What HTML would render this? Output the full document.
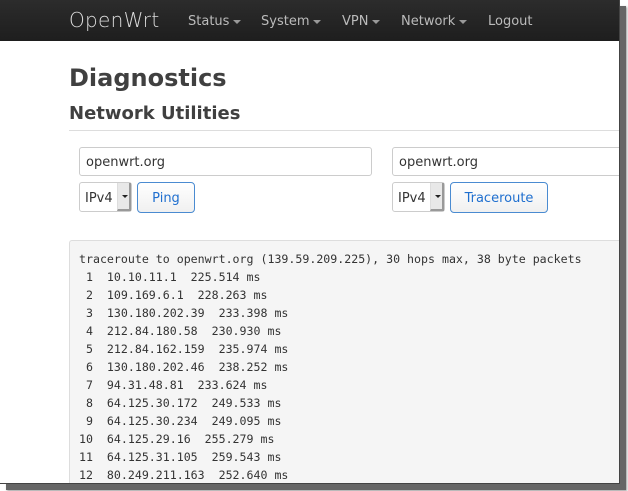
<!DOCTYPE html>
<html><head><meta charset="utf-8"><style>
*{box-sizing:border-box;margin:0;padding:0}
body{width:628px;height:491px;background:#fff;overflow:hidden;position:relative;font-family:"DejaVu Sans","Liberation Sans",sans-serif}
#shadow{position:absolute;left:6px;top:6px;width:620px;height:484px;background:#666;box-shadow:1px 1px 2px #999}
#page{position:absolute;left:0;top:0;width:620px;height:484px;background:#fff;overflow:hidden;border-right:1px solid #444;border-bottom:1px solid #444}
#nav{height:41px;background:linear-gradient(#2c2c2c,#1e1e1e);position:relative;color:#ccc}
#nav .brand{position:absolute;left:69px;top:8px;font-size:20px;color:#ddd;font-weight:300;letter-spacing:0.3px}
#nav .it{position:absolute;top:14px;font-size:13px;color:#bbb}
.car{display:inline-block;border-left:4px solid transparent;border-right:4px solid transparent;border-top:4px solid #999;vertical-align:middle;margin-left:4px}
h1{position:absolute;left:69px;top:64px;font-size:24px;font-weight:bold;color:#404040}
h2{position:absolute;left:69px;top:103px;font-size:18px;font-weight:bold;color:#404040}
.hr{position:absolute;left:69px;top:130px;width:560px;border-top:1px solid #ddd}
.inp{position:absolute;height:29px;border:1px solid #ccc;border-radius:3px;font-size:13px;color:#333;padding:7px 0 0 6px;background:#fff}
.sel{position:absolute;top:182px;width:53px;height:30px;border:1px solid #ccc;border-radius:3px;font-size:13px;color:#333;padding:8px 0 0 5px;background:#fff}
.sel .ar{position:absolute;right:0;top:0;width:14px;height:28px;background:#e8e8e8;border-left:1px solid #ddd;border-right:2px solid #999;border-bottom:2px solid #999}
.sel .ar:after{content:"";position:absolute;left:4px;top:12px;border-left:3px solid transparent;border-right:3px solid transparent;border-top:3px solid #222}
.btn{position:absolute;top:182px;height:31px;border:1px solid #4a8bd1;border-radius:4px;background:linear-gradient(#fff,#f0f0f0);color:#1f6fcf;font-size:13px;text-align:center;padding-top:8px}
pre{position:absolute;left:69px;top:240px;width:600px;height:260px;background:#f5f5f5;border:1px solid #ddd;border-radius:3px;font-family:"DejaVu Sans Mono","Liberation Mono",monospace;font-size:11.6px;line-height:18px;color:#333;padding:9px 0 0 9px}
</style></head><body>
<div id="shadow"></div>
<div id="page">
<div id="nav">
<span class="brand">OpenWrt</span>
<span class="it" style="left:188px">Status<span class="car"></span></span>
<span class="it" style="left:261px">System<span class="car"></span></span>
<span class="it" style="left:342px">VPN<span class="car"></span></span>
<span class="it" style="left:401px">Network<span class="car"></span></span>
<span class="it" style="left:488px">Logout</span>
</div>
<h1>Diagnostics</h1>
<h2>Network Utilities</h2>
<div class="hr"></div>
<div class="inp" style="left:79px;top:147px;width:293px">openwrt.org</div>
<div class="inp" style="left:392px;top:147px;width:260px">openwrt.org</div>
<div class="sel" style="left:79px">IPv4<span class="ar"></span></div>
<div class="btn" style="left:137px;width:58px">Ping</div>
<div class="sel" style="left:392px">IPv4<span class="ar"></span></div>
<div class="btn" style="left:450px;width:98px">Traceroute</div>
<pre>traceroute to openwrt.org (139.59.209.225), 30 hops max, 38 byte packets
 1  10.10.11.1  225.514 ms
 2  109.169.6.1  228.263 ms
 3  130.180.202.39  233.398 ms
 4  212.84.180.58  230.930 ms
 5  212.84.162.159  235.974 ms
 6  130.180.202.46  238.252 ms
 7  94.31.48.81  233.624 ms
 8  64.125.30.172  249.533 ms
 9  64.125.30.234  249.095 ms
10  64.125.29.16  255.279 ms
11  64.125.31.105  259.543 ms
12  80.249.211.163  252.640 ms</pre>
</div>
</body></html>
